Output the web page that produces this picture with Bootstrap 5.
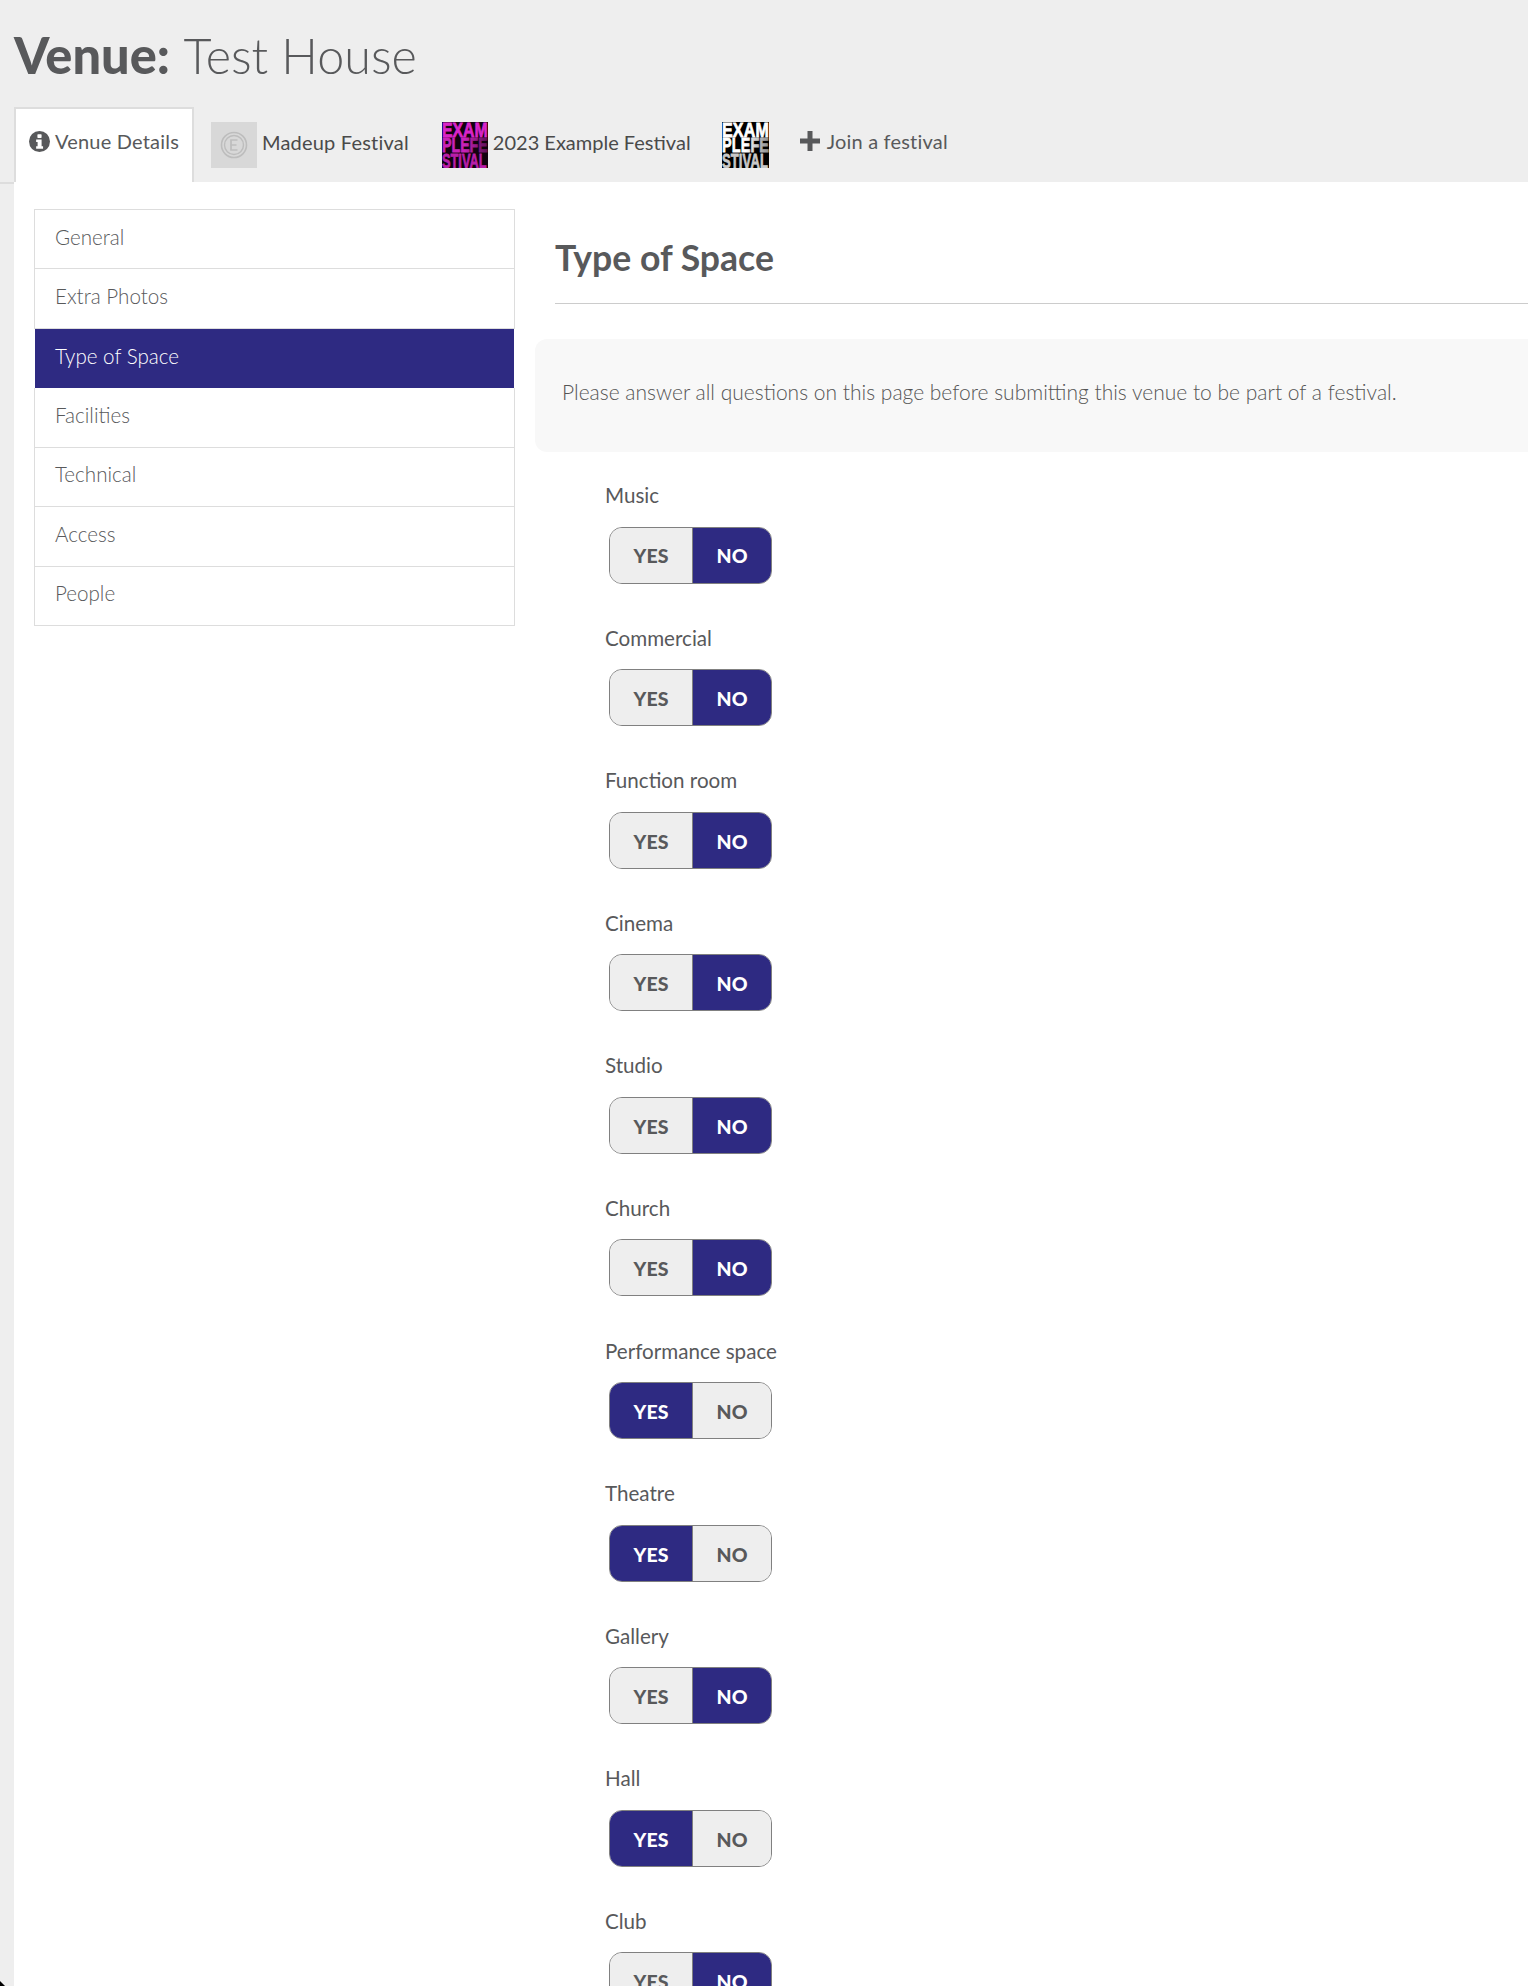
<!DOCTYPE html>
<html lang="en">
<head>
<meta charset="utf-8">
<title>Venue: Test House</title>
<link href="https://cdn.jsdelivr.net/npm/bootstrap@5.3.0/dist/css/bootstrap.min.css" rel="stylesheet">
<style>
html,body{height:1986px;overflow:hidden}
body{background:#eee;color:#58595b;font-family:"Lato","Liberation Sans",sans-serif;font-size:20px;position:relative}
.venue-title{font-size:48.500px;font-weight:300;line-height:56px;margin:0;padding:27px 14px 24px;color:#58595b;white-space:nowrap}
.venue-title b{font-weight:900;font-size:50.500px;margin-right:2px}
.venue-tabs{height:77px;padding-left:14px;border-bottom:2px solid #ddd;flex-wrap:nowrap;align-items:stretch;gap:0}
.venue-tabs .nav-link{display:flex;align-items:center;color:#4a4a4a;border:0;border-radius:0;padding:0;font-size:20px;background:none;white-space:nowrap;font-weight:400;height:75px;letter-spacing:.2px}
.venue-tabs .nav-link.tab-live{background:#fff;width:180px;padding-left:13px;margin-right:17px;height:77px;border:2px solid #ddd;border-bottom:0;color:#58595b;gap:5px;padding-bottom:11px;margin-bottom:-2px;z-index:1}
.venue-tabs svg{flex:none;display:block}
.tab-text{margin-bottom:5px}
.tab-one{margin-right:33px;gap:5px}
.venue-tabs .nav-link.tab-two{margin-right:31px;gap:5px;letter-spacing:0}
.tab-three{margin-right:31px}
.venue-tabs .nav-link.tab-join{gap:7px;padding-bottom:7px;color:#58595b}
.venue-panel{background:#fff;margin-left:14px;margin-top:-2px;padding:27px 0 0 20px;gap:21px;position:relative;z-index:0;margin-right:-30px;min-height:1800px;flex-wrap:nowrap}
.side-list{width:481px;flex:none;align-self:flex-start;border-radius:0;font-weight:300}
.side-list .list-group-item{height:59.500px;padding:0 20px 4px;display:flex;align-items:center;color:#58595b;border:1px solid #ddd;border-top-width:0;font-size:20.600px;background:#fff;margin:0}
.side-list .list-group-item:first-child{border-top-width:1px;height:60px;border-radius:0}
.side-list .list-group-item:last-child{border-radius:0}
.side-list .list-group-item.active{background:#2e2a82;color:#fff;border-color:#2e2a82;margin:0 1px;padding-left:19px}
.side-main{flex:1;min-width:0}
.space-title{font-size:35.600px;font-weight:700;margin:0 0 0 19px;padding:26px 0 22px;border-bottom:1px solid #ccc;line-height:46px;color:#58595b}
.note-box{background:#f8f8f8;border-radius:12px;margin:35px 0 0 -1px;height:113px;padding:0 27px 7px;display:flex;align-items:center;font-weight:300;font-size:21px;white-space:nowrap;color:#555}
.q-list{padding:28px 0 0 69px}
.q-item{height:142.600px}
.q-label{font-size:20.600px;line-height:30px;margin:0 0 16.500px;font-weight:400;display:block;color:#58595b}
.tog{display:inline-flex;margin-left:4px;width:163px;height:57px;border:1px solid #808080;border-radius:13px;overflow:hidden;background:#eee}
.tog .tog-opt{display:flex;align-items:center;justify-content:center;font-weight:900;font-size:19.500px;color:#58595b;height:100%;padding:2px 0 0;border:0;border-radius:0;background:#eee}
.tog .tog-opt:first-child{width:83px;border-right:1px solid #808080}
.tog .tog-opt:last-child{flex:1}
.tog .tog-opt.on{background:#2e2a82;color:#fff}
.win-corner{position:absolute;left:0;bottom:0;width:0;height:0;border-style:solid;border-width:5px 0 0 5px;border-color:transparent transparent transparent #000}
</style>
</head>
<body>
<h1 class="venue-title"><b>Venue:</b> Test House</h1>
<ul class="nav nav-tabs venue-tabs">
  <li class="nav-item"><a class="nav-link active tab-live" href="#">
    <svg width="21" height="21" viewBox="0 0 20 20"><circle cx="10" cy="10" r="10" fill="#58595b"/><rect x="8" y="3.2" width="4" height="3.4" rx=".6" fill="#fff"/><path d="M6.8 8.2h5.2v6.4h1.4v2.2H6.8v-2.2h1.4v-4.2H6.8z" fill="#fff"/></svg>
    Venue Details</a></li>
  <li class="nav-item"><a class="nav-link tab-one" href="#">
    <svg width="46" height="46" viewBox="0 0 46 46"><rect width="46" height="46" fill="#d8d8d8"/><circle cx="23" cy="23" r="12.5" fill="none" stroke="#bdbdbd" stroke-width="1.6"/><circle cx="23" cy="23" r="9.5" fill="none" stroke="#bdbdbd" stroke-width="1.4"/><path d="M26.5 18h-6.500v10h6.500M20 23h5.500" fill="none" stroke="#bdbdbd" stroke-width="1.700"/></svg>
    <span class="tab-text">Madeup Festival</span></a></li>
  <li class="nav-item"><a class="nav-link tab-two" href="#">
    <svg width="46" height="46" viewBox="0 0 46 46" font-family="'Liberation Sans',sans-serif" font-weight="700" font-size="20"><defs><linearGradient id="pk2" x1="0" y1="0" x2="1" y2="0"><stop offset=".5" stop-color="#c822b8"/><stop offset="1" stop-color="#5c1054"/></linearGradient></defs><rect width="46" height="46" fill="#12020f"/>
      <g transform="translate(0 15) scale(.79 1)"><text fill="#d924c8" stroke="#d924c8" stroke-width=".8">EXAM</text></g>
      <g transform="translate(0 30) scale(.71 1)"><text fill="url(#pk2)" stroke="url(#pk2)" stroke-width=".8">PLEFE</text></g>
      <g transform="translate(0 45.500) scale(.64 1)"><text fill="#b81fa9" stroke="#b81fa9" stroke-width=".8">STIVAL</text></g></svg>
    <span class="tab-text">2023 Example Festival</span></a></li>
  <li class="nav-item"><a class="nav-link tab-three" href="#">
    <svg width="47" height="46" viewBox="0 0 47 46" font-family="'Liberation Sans',sans-serif" font-weight="700" font-size="20"><defs><linearGradient id="gy2" x1="0" y1="0" x2="1" y2="0"><stop offset=".5" stop-color="#fff"/><stop offset="1" stop-color="#8a8a8a"/></linearGradient></defs><rect width="47" height="46" fill="#000"/>
      <g transform="translate(0 15) scale(.8 1)"><text fill="#fff" stroke="#fff" stroke-width=".8">EXAM</text></g>
      <g transform="translate(0 30) scale(.72 1)"><text fill="url(#gy2)" stroke="url(#gy2)" stroke-width=".8">PLEFE</text></g>
      <g transform="translate(0 45.500) scale(.65 1)"><text fill="#c8c8c8" stroke="#c8c8c8" stroke-width=".8">STIVAL</text></g></svg>
  </a></li>
  <li class="nav-item"><a class="nav-link tab-join" href="#">
    <svg width="20" height="20" viewBox="0 0 20 20"><path d="M7.500 0h5v7.500H20v5h-7.500V20h-5v-7.500H0v-5h7.500z" fill="#58595b"/></svg>
    Join a festival</a></li>
</ul>
<div class="venue-panel d-flex">
  <div class="list-group side-list">
    <a href="#" class="list-group-item">General</a>
    <a href="#" class="list-group-item">Extra Photos</a>
    <a href="#" class="list-group-item active">Type of Space</a>
    <a href="#" class="list-group-item">Facilities</a>
    <a href="#" class="list-group-item">Technical</a>
    <a href="#" class="list-group-item">Access</a>
    <a href="#" class="list-group-item">People</a>
  </div>
  <div class="side-main">
    <h3 class="space-title">Type of Space</h3>
    <div class="note-box">Please answer all questions on this page before submitting this venue to be part of a festival.</div>
    <div class="q-list">
      <div class="q-item"><span class="q-label">Music</span><div class="tog"><span class="tog-opt">YES</span><span class="tog-opt on">NO</span></div></div>
      <div class="q-item"><span class="q-label">Commercial</span><div class="tog"><span class="tog-opt">YES</span><span class="tog-opt on">NO</span></div></div>
      <div class="q-item"><span class="q-label">Function room</span><div class="tog"><span class="tog-opt">YES</span><span class="tog-opt on">NO</span></div></div>
      <div class="q-item"><span class="q-label">Cinema</span><div class="tog"><span class="tog-opt">YES</span><span class="tog-opt on">NO</span></div></div>
      <div class="q-item"><span class="q-label">Studio</span><div class="tog"><span class="tog-opt">YES</span><span class="tog-opt on">NO</span></div></div>
      <div class="q-item"><span class="q-label">Church</span><div class="tog"><span class="tog-opt">YES</span><span class="tog-opt on">NO</span></div></div>
      <div class="q-item"><span class="q-label">Performance space</span><div class="tog"><span class="tog-opt on">YES</span><span class="tog-opt">NO</span></div></div>
      <div class="q-item"><span class="q-label">Theatre</span><div class="tog"><span class="tog-opt on">YES</span><span class="tog-opt">NO</span></div></div>
      <div class="q-item"><span class="q-label">Gallery</span><div class="tog"><span class="tog-opt">YES</span><span class="tog-opt on">NO</span></div></div>
      <div class="q-item"><span class="q-label">Hall</span><div class="tog"><span class="tog-opt on">YES</span><span class="tog-opt">NO</span></div></div>
      <div class="q-item"><span class="q-label">Club</span><div class="tog"><span class="tog-opt">YES</span><span class="tog-opt on">NO</span></div></div>
    </div>
  </div>
</div>
<div class="win-corner"></div>
<script src="https://cdn.jsdelivr.net/npm/bootstrap@5.3.0/dist/js/bootstrap.bundle.min.js"></script>
</body>
</html>
